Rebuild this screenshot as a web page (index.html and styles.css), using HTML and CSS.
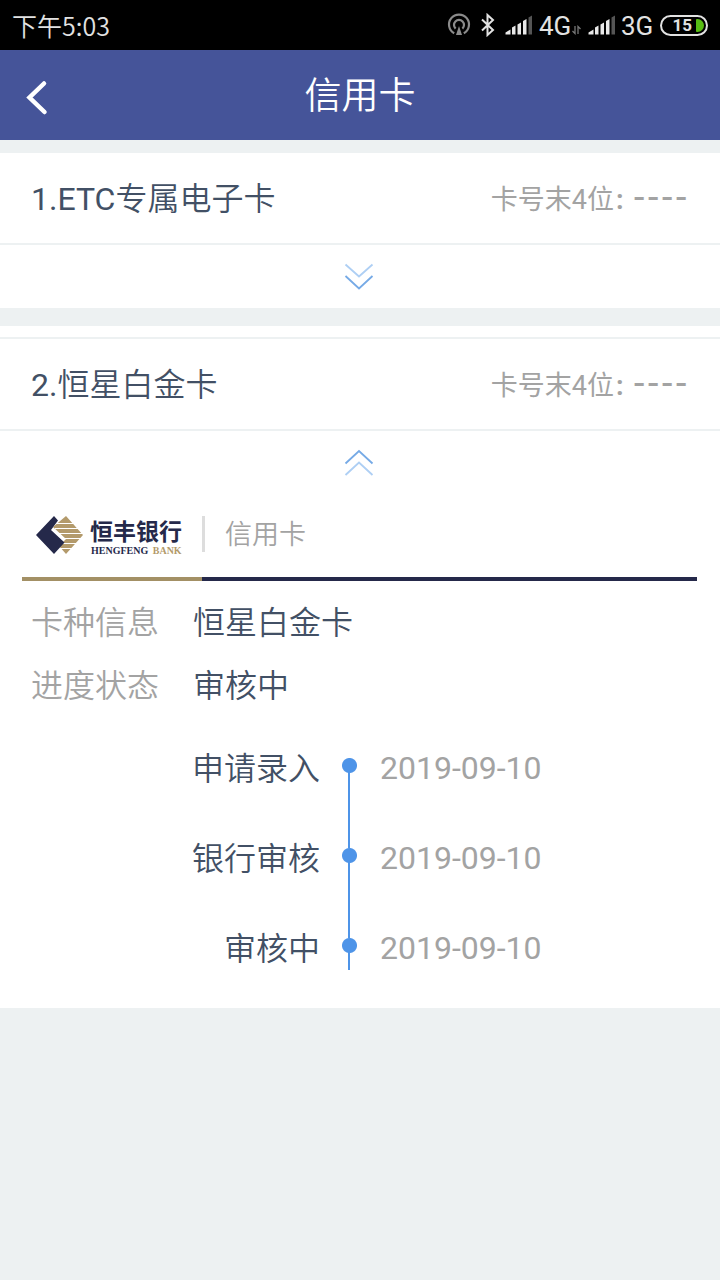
FILE: index.html
```html
<!DOCTYPE html>
<html lang="zh-CN">
<head>
  <meta charset="UTF-8">
  <title>信用卡</title>
  <link rel="stylesheet" href="styles.css">
</head>
<body>
  <div class="status-bar">
    <span class="time">下午5:03</span>
    <svg class="hotspot" width="24" height="24" viewBox="0 0 24 24">
      <path d="M7.2 20.3A10 10 0 1 1 16.8 20.3" />
      <path d="M8.6 15.6A5 5 0 1 1 15.4 15.6" />
      <path class="solid" d="M12 13l3 9H9z" />
    </svg>
    <svg class="bluetooth" width="16" height="24" viewBox="0 0 16 24">
      <path d="M2 6.5l11 10.5-5.5 5V2l5.5 5L2 17.5" />
    </svg>
    <svg class="signal" width="28" height="20" viewBox="0 0 28 20">
      <path d="M.5 19.500v-2l5-3v5zM7 12.500l3.500-2v9H7zM12.500 9.500l3.500-2v12h-3.500zM18 6l3.500-2v15.500H18z" />
      <path class="off" d="M23.500 2.500l3.500-2v19h-3.500z" />
    </svg>
    <span class="network">4G</span>
    <svg class="updown" width="9" height="10" viewBox="0 0 9 10">
      <path d="M3 1v7.500L.5 6M6 9V1.500L8.500 4" />
    </svg>
    <svg class="signal second" width="28" height="20" viewBox="0 0 28 20">
      <path d="M.5 19.500v-2l5-3v5zM7 12.500l3.500-2v9H7zM12.500 9.500l3.500-2v12h-3.500zM18 6l3.500-2v15.500H18z" />
      <path class="off" d="M23.500 2.500l3.500-2v19h-3.500z" />
    </svg>
    <span class="network">3G</span>
    <div class="battery"><span>15</span><i></i></div>
  </div>

  <div class="navbar">
    <svg class="back" width="24" height="36" viewBox="0 0 24 36">
      <path d="M20 3.500L5.500 17.500 20.500 32" />
    </svg>
    <h1>信用卡</h1>
  </div>

  <div class="card">
    <div class="card-head">
      <span class="card-name"><span>1.ETC</span>专属电子卡</span>
      <span class="card-no">卡号末4位<b>:</b><em>----</em></span>
    </div>
    <div class="toggle">
      <svg width="30" height="30" viewBox="0 0 30 30">
        <path class="light" d="M1.500 2.500L15 14.500 28.500 2.500" />
        <path d="M1.500 14L15 26.500 28.500 14" />
      </svg>
    </div>
  </div>

  <div class="card open">
    <div class="card-head">
      <span class="card-name"><span>2.</span>恒星白金卡</span>
      <span class="card-no">卡号末4位<b>:</b><em>----</em></span>
    </div>
    <div class="toggle">
      <svg width="30" height="30" viewBox="0 0 30 30">
        <path d="M1.500 15.500L15 3 28.500 15.500" />
        <path class="light" d="M1.500 27L15 14.500 28.500 27" />
      </svg>
    </div>

    <div class="bank">
      <svg class="logo" width="48" height="40" viewBox="0 0 48 40">
        <path class="gold" d="M31 1l17 19-17 19-7-8 7-7-13-12z" />
        <path class="stripe" d="M20 8.500h22M20 13.500h28M20 18.500h28M24 23.500h24M24 28.500h22M22 33.500h20" />
        <path class="navy" d="M19 1L1 20l18 19 10.500-11.500L16 15l7-9.500z" />
      </svg>
      <div class="bank-name">
        <div class="cn">恒丰银行</div>
        <div class="en">HENGFENG <span>BANK</span></div>
      </div>
      <div class="bank-type">信用卡</div>
    </div>
    <div class="rule"></div>

    <div class="info"><span class="label">卡种信息</span><span>恒星白金卡</span></div>
    <div class="info"><span class="label">进度状态</span><span>审核中</span></div>

    <div class="steps">
      <div class="step">
        <span class="step-name">申请录入</span>
        <span class="line"></span>
        <span class="date">2019-09-10</span>
      </div>
      <div class="step">
        <span class="step-name">银行审核</span>
        <span class="line"></span>
        <span class="date">2019-09-10</span>
      </div>
      <div class="step">
        <span class="step-name">审核中</span>
        <span class="line"></span>
        <span class="date">2019-09-10</span>
      </div>
    </div>
  </div>
</body>
</html>
```
FILE: styles.css
```css
* {
  box-sizing: border-box;
}

body {
  margin: 0;
  min-height: 100vh;
  background: #edf1f2;
  color: #425065;
  font-family: Roboto, "Noto Sans CJK SC", sans-serif;
  font-size: 32px;
}

svg {
  display: block;
  flex: none;
  fill: none;
}

/* status bar */
.status-bar {
  display: flex;
  align-items: center;
  height: 50px;
  padding: 0 12px 0 12px;
  background: #000;
  color: #e2e2e2;
  white-space: nowrap;
}

.time {
  flex: 1;
  font-family: "Noto Sans CJK SC", sans-serif;
  font-size: 25px;
  font-weight: 350;
  line-height: 50px;
}

.hotspot {
  stroke: #8b8b8b;
  stroke-width: 2.2;
}

.hotspot .solid {
  fill: #8b8b8b;
  stroke: none;
}

.bluetooth {
  margin-left: 9px;
  stroke: #e2e2e2;
  stroke-width: 2;
}

.signal {
  margin: 0 6px 0 9px;
  fill: #e8e8e8;
}

.signal.second {
  margin: 0 5px 0 7px;
}

.signal .off {
  fill: #555;
}

.network {
  width: 33px;
  font-size: 26px;
  line-height: 50px;
  padding-top: 1px;
}

.updown {
  margin-top: 10px;
  stroke: #777;
  stroke-width: 1.3;
}

.battery {
  display: flex;
  align-items: center;
  justify-content: flex-end;
  width: 48px;
  height: 21px;
  margin-left: 6px;
  padding-right: 2px;
  border: 2px solid #e2e2e2;
  border-radius: 11px;
  font-size: 17px;
  font-weight: 700;
}

.battery i {
  width: 8px;
  height: 13px;
  margin-left: 4px;
  border-radius: 1px 7px 7px 1px;
  background: #59bd13;
}

/* title bar */
.navbar {
  display: grid;
  grid-template-columns: 50px 1fr 50px;
  align-items: center;
  height: 90px;
  margin-bottom: 13px;
  padding: 0 24px;
  background: #455499;
  color: #fff;
}

.back {
  margin-top: 5px;
  stroke: #fff;
  stroke-width: 4.5;
  stroke-linecap: round;
}

.navbar h1 {
  margin: 0;
  padding-top: 4px;
  font-size: 37px;
  font-weight: 350;
  line-height: 86px;
  text-align: center;
}

/* cards */
.card {
  height: 155px;
  margin-bottom: 18px;
  background: #fff;
}

.card.open {
  height: 682px;
  padding-top: 11px;
}

.card-head {
  display: flex;
  justify-content: space-between;
  height: 92px;
  padding: 0 31px;
  border-bottom: 2px solid #edf1f2;
  line-height: 93px;
}

.open .card-head {
  height: 94px;
  border-top: 2px solid #edf1f2;
}

.card-name {
  font-weight: 350;
}

.card-name span {
  font-weight: 400;
}

.card-no {
  display: flex;
  color: #a3a3a3;
  font-size: 27px;
  line-height: 94px;
  white-space: nowrap;
}

.card-no b {
  width: 19px;
  padding-left: 2px;
}

.card-no em {
  width: 56px;
  font-family: "Liberation Sans", sans-serif;
  font-style: normal;
  font-size: 37px;
  line-height: 86px;
  letter-spacing: 1.7px;
}

.toggle {
  display: flex;
  justify-content: center;
  height: 63px;
  padding: 17px 3px 0 0;
}

.toggle path {
  stroke: #76aae6;
  stroke-width: 1.8;
}

.toggle .light {
  stroke: #aecff4;
}

/* bank header */
.bank {
  display: flex;
  height: 83px;
  padding: 21px 0 0 35px;
}

.logo .gold {
  fill: #b39a6b;
}

.logo .navy {
  fill: #25294a;
}

.logo .stripe {
  stroke: #fff;
  stroke-width: 1;
}

.bank-name {
  width: 94px;
  margin-left: 7px;
  color: #25294a;
  white-space: nowrap;
}

.cn {
  font-family: "Noto Sans CJK SC", sans-serif;
  font-size: 23px;
  font-weight: 700;
  line-height: 30px;
}

.en {
  padding-left: 1px;
  font-family: "Liberation Serif", serif;
  font-size: 10px;
  font-weight: 700;
  line-height: 12px;
}

.en span {
  margin-left: 2px;
  color: #b39a6b;
}

.bank-type {
  height: 36px;
  margin: 1px 0 0 18px;
  padding-left: 20px;
  border-left: 3px solid #ddd;
  color: #a3a3a3;
  font-size: 27px;
  font-weight: 350;
  line-height: 39px;
}

.rule {
  height: 4px;
  margin: 0 23px 9px 22px;
  background: linear-gradient(to right, #a39065 180px, #25294a 180px);
}

.info {
  display: flex;
  height: 63px;
  padding-left: 31px;
  font-weight: 350;
  line-height: 67px;
}

.label {
  width: 162px;
  color: #a3a3a3;
}

/* progress */
.steps {
  padding-top: 34px;
}

.step {
  display: grid;
  grid-template-columns: 320px 58px 1fr;
  height: 90px;
}

.step-name {
  font-weight: 350;
  line-height: 38px;
  text-align: right;
}

.line {
  width: 16px;
  margin: 8px 0 -8px 21px;
  background:
    radial-gradient(circle at 8.5px 7.5px, #4e94e8 7px, transparent 8px),
    linear-gradient(#4e94e8, #4e94e8) 7px 7px / 2px 100% no-repeat;
}

.step:last-child .line {
  height: 32px;
}

.date {
  padding-left: 2px;
  color: #a3a3a3;
  line-height: 36px;
}
```
